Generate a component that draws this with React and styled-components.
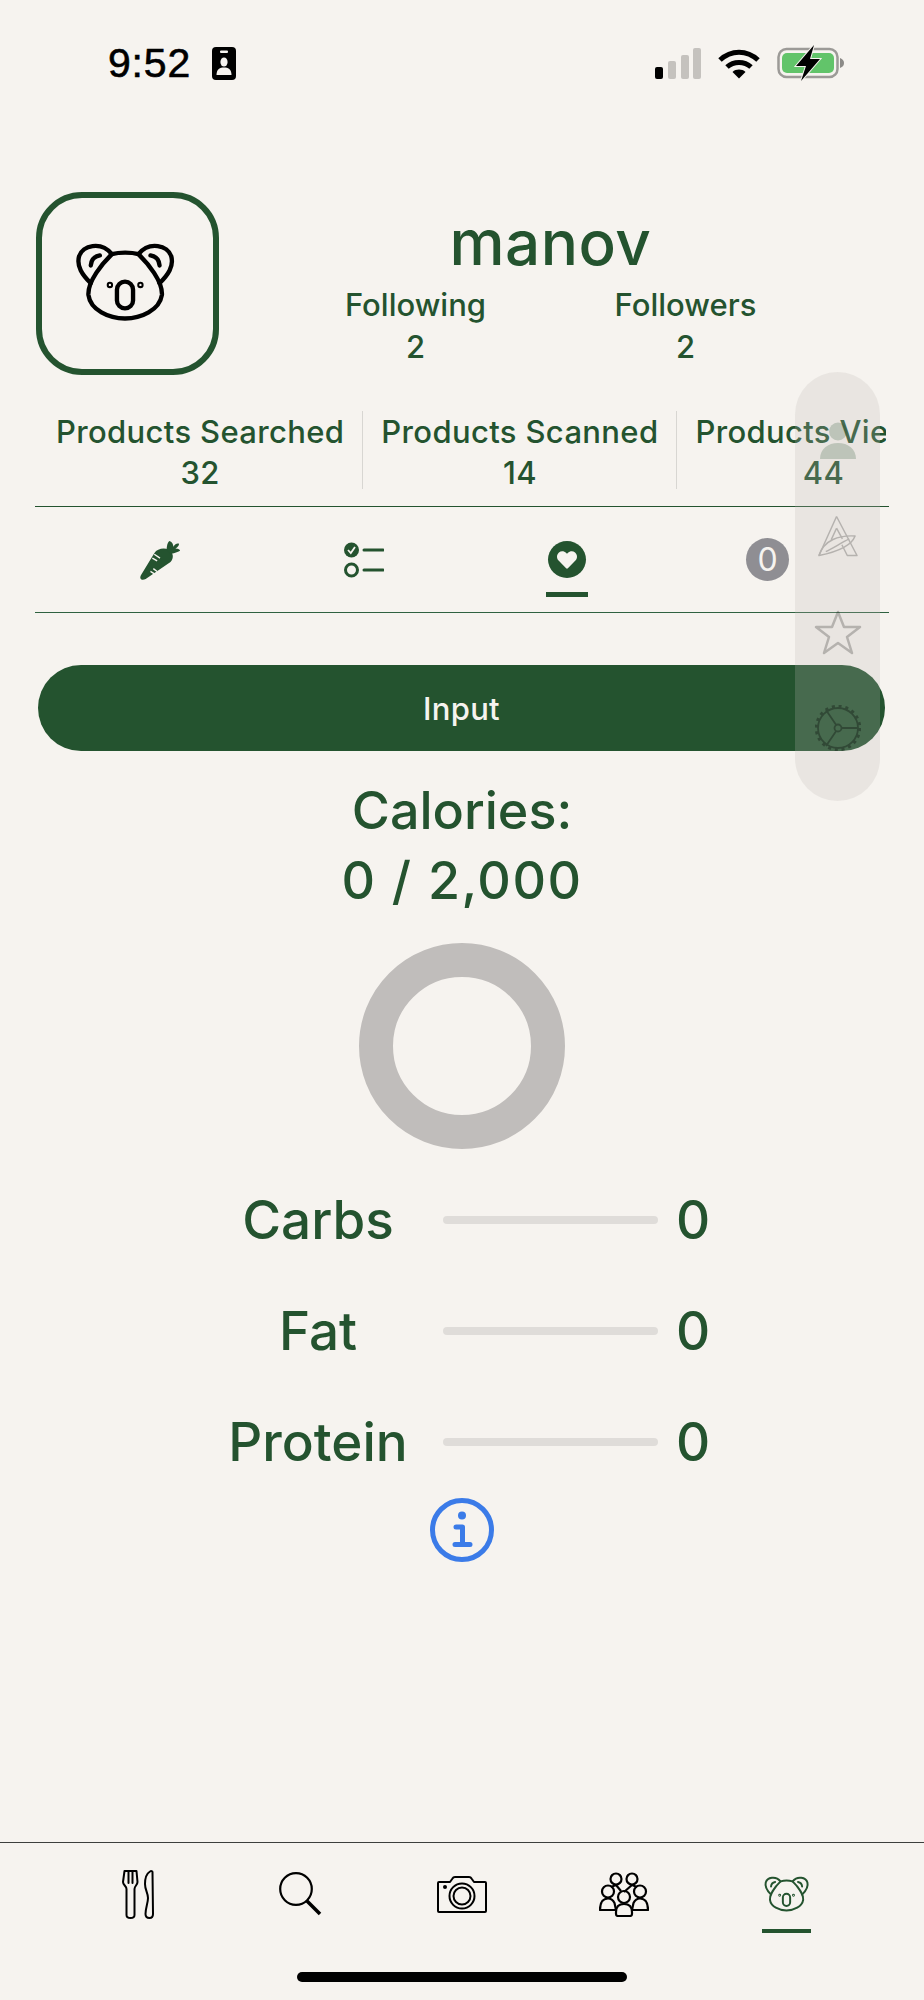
import React from "react";
import styled, { createGlobalStyle } from "styled-components";
import { FaHeart } from "react-icons/fa";

const GREEN = "#24532f";

const Global = createGlobalStyle`
  html, body { margin: 0; padding: 0; background: #f6f3ef; }
  * { box-sizing: border-box; }
`;

const Page = styled.div`
  position: relative;
  width: 924px;
  height: 2000px;
  overflow: hidden;
  background: #f6f3ef;
  color: ${GREEN};
  font-family: Inter, "Liberation Sans", sans-serif;
  display: flex;
  flex-direction: column;
`;

const StatusBar = styled.div`
  height: 126px;
  padding: 0 79px 0 108px;
  display: flex;
  align-items: center;
  justify-content: space-between;
  color: #000;
`;
const StatusGroup = styled.div`
  display: flex;
  align-items: center;
  gap: ${(p) => p.$gap}px;
`;
const Clock = styled.span`
  font-family: "Liberation Sans", sans-serif;
  font-size: 41px;
  letter-spacing: 0.8px;
  font-weight: 400;
  -webkit-text-stroke: 0.6px #000;
  line-height: 1;
`;

const Main = styled.main`
  flex: 1;
  padding: 66px 35px 0 35px;
  display: flex;
  flex-direction: column;
  min-height: 0;
`;

const Profile = styled.section`
  display: flex;
  align-items: flex-start;
`;
const Avatar = styled.div`
  width: 183px;
  height: 183px;
  flex: none;
  margin-left: 1px;
  border: 6px solid ${GREEN};
  border-radius: 46px;
  display: flex;
  align-items: center;
  justify-content: center;
  svg { margin-top: -3px; margin-left: -5px; }
`;
const ProfileInfo = styled.div`
  flex: 1;
  display: flex;
  flex-direction: column;
  align-items: center;
  padding-top: 13px;
  padding-right: 7px;
`;
const Username = styled.h1`
  margin: 0;
  font-size: 62px;
  line-height: 76px;
  font-weight: 500;
  letter-spacing: 0.5px;
`;
const FollowRow = styled.div`
  display: flex;
  margin-top: 3px;
`;
const Follow = styled.div`
  width: 270px;
  text-align: center;
  font-size: 31px;
  line-height: 42px;
  font-weight: 500;
  letter-spacing: 0;
`;

const Stats = styled.section`
  display: flex;
  margin: 36px 0 0 0;
  width: 851px;
  padding-left: 21px;
  overflow: hidden;
  white-space: nowrap;
  height: 95px;
  padding-bottom: 17px;
  flex: none;
`;
const Stat = styled.div`
  flex: none;
  padding: 0 18px;
  text-align: center;
  font-size: 31px;
  line-height: 41px;
  font-weight: 500;
  letter-spacing: 0.35px;
  border-left: 1px solid #d8d6d2;
  &:first-child { border-left: 0; padding-left: 0; }
`;

const Tabs = styled.nav`
  height: 107px;
  flex: none;
  border-top: 1.5px solid ${GREEN};
  border-bottom: 1.5px solid #2f6140;
  width: 854px;
  padding-left: 23px;
  display: grid;
  grid-template-columns: 204px 204px 201px 201px;
`;
const Tab = styled.div`
  position: relative;
  display: flex;
  align-items: center;
  justify-content: center;
  &::after {
    content: "";
    display: ${(p) => (p.$active ? "block" : "none")};
    position: absolute;
    left: 50%;
    bottom: 15px;
    width: 42px;
    height: 5px;
    margin-left: -21px;
    background: ${GREEN};
  }
`;
const HeartDisc = styled.div`
  width: 38px;
  height: 37px;
  border-radius: 50%;
  background: ${GREEN};
  color: #f6f3ef;
  display: flex;
  align-items: center;
  justify-content: center;
`;
const CountBadge = styled.div`
  width: 43px;
  height: 43px;
  border-radius: 50%;
  background: #8f8e93;
  color: #f6f3ef;
  font-size: 32px;
  display: flex;
  align-items: center;
  justify-content: center;
`;

const InputButton = styled.button`
  display: block;
  flex: none;
  width: 847px;
  height: 86px;
  margin: 52px 0 0 3px;
  border: 0;
  border-radius: 43px;
  background: ${GREEN};
  color: #f6f3ef;
  font: 500 31px Inter, sans-serif;
  letter-spacing: 0.3px;
`;

const Summary = styled.section`
  display: flex;
  flex-direction: column;
  align-items: center;
`;
const CaloriesLine = styled.div`
  font-size: 52px;
  line-height: 70px;
  font-weight: 500;
  letter-spacing: ${(p) => p.$spacing || 0}px;
  &:first-child { margin-top: 25px; }
`;
const Donut = styled.div`
  width: 206px;
  height: 206px;
  margin-top: 27px;
  border-radius: 50%;
  border: 34px solid #c0bdbb;
`;
const Macros = styled.div`
  margin-top: 15px;
  width: 100%;
  display: flex;
  flex-direction: column;
`;
const MacroRow = styled.div`
  display: grid;
  grid-template-columns: 390px 215px auto;
  column-gap: 18px;
  align-items: center;
  height: 111px;
`;
const MacroLabel = styled.div`
  justify-self: end;
  width: 214px;
  text-align: center;
  font-size: 53px;
  font-weight: 500;
`;
const MacroBar = styled.div`
  height: 8px;
  border-radius: 4px;
  background: #dfdcd9;
`;
const MacroValue = styled.div`
  font-size: 53px;
  font-weight: 500;
`;
const InfoButton = styled.div`
  margin-top: 1px;
  display: flex;
  justify-content: center;
`;

const BottomNav = styled.nav`
  flex: none;
  height: 158px;
  border-top: 1px solid #3d3f3d;
  padding: 0 57px;
  display: grid;
  grid-template-columns: repeat(5, 162px);
  align-items: start;
`;
const NavItem = styled.div`
  position: relative;
  height: 102px;
  display: flex;
  align-items: center;
  justify-content: center;
  &::after {
    content: "";
    display: ${(p) => (p.$active ? "block" : "none")};
    position: absolute;
    left: 50%;
    top: 86px;
    width: 49px;
    height: 4px;
    margin-left: -24px;
    background: ${GREEN};
  }
`;
const HomeIndicator = styled.div`
  position: absolute;
  left: 297px;
  bottom: 18px;
  width: 330px;
  height: 10px;
  border-radius: 5px;
  background: #000;
`;

const FloatingDock = styled.aside`
  position: absolute;
  left: 795px;
  top: 372px;
  width: 85px;
  height: 429px;
  border-radius: 43px;
  padding-top: 20px;
  background: rgba(190, 187, 180, 0.23);
  display: flex;
  flex-direction: column;
  align-items: center;
`;
const DockSlot = styled.div`
  height: 96px;
  display: flex;
  align-items: center;
  justify-content: center;
`;

const Koala = ({ size, color = "#000", w = 14 }) => (
  <svg width={size} height={size * 0.8} viewBox="222 216 310 248" fill="none" stroke={color} strokeWidth={w} strokeLinecap="round" strokeLinejoin="round">
    <path d="M275 345C250 320 232 295 240 265C250 232 305 218 338 258" />
    <path d="M480 345C505 320 523 295 515 265C505 232 450 218 417 258" />
    <path d="M338 258C360 252 395 252 417 258C445 285 490 340 487 380C480 425 425 450 377 450C329 450 274 425 268 380C265 340 310 285 338 258Z" />
    <rect x="353" y="340" width="48" height="80" rx="24" />
    <path d="M275 292C276 275 285 265 302 262" />
    <path d="M480 292C479 275 470 265 453 262" />
    <circle cx="332" cy="350" r="3" />
    <circle cx="423" cy="350" r="3" />
  </svg>
);

const IdBadge = () => (
  <svg width="24" height="33" viewBox="0 0 24 33">
    <rect width="24" height="33" rx="4" fill="#000" />
    <rect x="8" y="3.5" width="8" height="2.5" rx="1" fill="#f6f3ef" />
    <ellipse cx="12" cy="15" rx="3.6" ry="4.6" fill="#f6f3ef" />
    <path d="M4.5 28C4.5 22 8 20.5 12 20.5S19.5 22 19.5 28Z" fill="#f6f3ef" />
  </svg>
);

const Signal = () => (
  <svg width="46" height="31" viewBox="0 0 46 31">
    <rect x="0" y="19" width="8" height="12" rx="2" fill="#000" />
    <rect x="13" y="13" width="8" height="18" rx="2" fill="#c5c2be" />
    <rect x="26" y="7" width="8" height="24" rx="2" fill="#c5c2be" />
    <rect x="38" y="0" width="8" height="31" rx="2" fill="#c5c2be" />
  </svg>
);

const Wifi = () => (
  <svg width="42" height="31" viewBox="0 0 42 31" fill="none" stroke="#000" strokeWidth="5">
    <path d="M2 12C13 1.5 29 1.5 40 12" />
    <path d="M9 19C15.500 13 26.500 13 33 19" />
    <path d="M21 30.500L14.500 24C18 20.800 24 20.800 27.500 24Z" fill="#000" stroke="none" />
  </svg>
);

const Battery = () => (
  <svg width="68" height="36" viewBox="0 0 68 36">
    <rect x="1.500" y="4" width="59" height="28" rx="8" fill="none" stroke="#9c9a97" strokeWidth="2.500" />
    <rect x="5" y="8" width="52" height="20" rx="5" fill="#62c46a" />
    <path d="M63 13C66 14 67 16 67 18S66 22 63 23Z" fill="#8c8a87" />
    <path d="M37 0L19 21H29L24 36L43 14H33Z" fill="#000" stroke="#f6f3ef" strokeWidth="2" />
    <path d="M37 0L19 21H29L24 36L43 14H33Z" fill="#000" />
  </svg>
);

const CarrotIcon = () => (
  <svg width="46" height="42" viewBox="17 13 46 44" fill={GREEN}>
    <path d="M20 51L34 28C37 23 44 22 49 24C54 27 55 33 51 37L25 55C21 57 18 55 20 51Z" />
    <path d="M47 25C47 20 48 16 50 15C53 16 54 19 54 21C56 18 58 17 60 18C60 20 58 22 56 23C58 23 61 24 61 25C59 27 53 28 51 29Z" />
    <path d="M34 29L40 33M32 33L37 36M30 47L35 50M33 44L37 47" stroke="#f6f3ef" strokeWidth="1.500" fill="none" />
  </svg>
);

const ChecklistIcon = () => (
  <svg width="40" height="36" viewBox="0 0 40 36" fill="none">
    <circle cx="7.500" cy="8" r="7.500" fill={GREEN} />
    <path d="M4 8L6.800 11L11 5" stroke="#f6f3ef" strokeWidth="1.800" />
    <circle cx="7.500" cy="28" r="6" stroke={GREEN} strokeWidth="3" />
    <path d="M20 8H39M20 28H39" stroke={GREEN} strokeWidth="3" strokeLinecap="round" />
  </svg>
);

const InfoIcon = () => (
  <svg width="64" height="64" viewBox="0 0 64 64" fill="none" stroke="#3b7be8">
    <circle cx="32" cy="32" r="29.500" strokeWidth="5" />
    <circle cx="32" cy="17.500" r="4" fill="#3b7be8" stroke="none" />
    <path d="M26 29H32.500V46M25 46.500H40" strokeWidth="5" strokeLinecap="round" strokeLinejoin="round" />
  </svg>
);

const ForkKnife = () => (
  <svg width="32" height="49" viewBox="0 0 32 49" fill="none" stroke="#000" strokeWidth="2" strokeLinejoin="round" strokeLinecap="round">
    <path d="M2.500 1H14.500L15.500 12C15.500 15 12.500 16 12.500 19V45C12.500 47 10.500 48 8.500 48S4.500 47 4.500 45V19C4.500 16 1 15 1 12Z" />
    <path d="M6.500 1V13M10.500 1V13" />
    <path d="M30.500 2C30.500 1 29 .8 28 1.500C24 4 23 9 23 14C23 20 26 23 26 28C26 33 23.500 38 23.500 44C23.500 47 25.500 48 27.500 48S31 47 31 44Z" />
  </svg>
);

const SearchIcon = () => (
  <svg width="43" height="44" viewBox="0 0 43 44" fill="none" stroke="#000">
    <circle cx="17" cy="17" r="15.800" strokeWidth="2.200" />
    <path d="M28 29L41 42" strokeWidth="3.500" />
  </svg>
);

const CameraIcon = () => (
  <svg width="50" height="37" viewBox="0 0 50 37" fill="none" stroke="#000" strokeWidth="2" strokeLinejoin="round">
    <path d="M2 6H13L15.500 2.500C16 1.500 17 1 18 1H32C33 1 34 1.500 34.500 2.500L37 6H48C48.600 6 49 6.400 49 7V35C49 35.600 48.600 36 48 36H2C1.400 36 1 35.600 1 35V7C1 6.400 1.400 6 2 6Z" />
    <circle cx="25" cy="20" r="12.500" />
    <circle cx="25" cy="20" r="8.500" />
    <circle cx="8" cy="11" r="2" fill="#000" stroke="none" />
  </svg>
);

const PeopleIcon = () => (
  <svg width="50" height="45" viewBox="0 0 50 45" fill="none" stroke="#000" strokeWidth="2.200" strokeLinejoin="round">
    <circle cx="17" cy="7" r="5.500" />
    <circle cx="33" cy="7" r="5.500" />
    <path d="M12 15L17 13L22 19M38 15L33 13L25 20" />
    <circle cx="9" cy="19.500" r="6" />
    <circle cx="41" cy="19.500" r="6" />
    <path d="M1 38C1 30 4 26.500 9 26.500C12 26.500 14 28 15.500 31L17 38H2Z" />
    <path d="M49 38C49 30 46 26.500 41 26.500C38 26.500 36 28 34.500 31L33 38H48Z" />
    <circle cx="25" cy="25" r="6" />
    <path d="M17 40C17 36 19 32 25 32S33 36 33 40V42C33 43 32 44 31 44H19C18 44 17 43 17 42Z" fill="#f6f3ef" />
  </svg>
);

const PersonGlyph = () => (
  <svg width="36" height="37" viewBox="0 0 36 37" fill="#24532f" opacity="0.22">
    <circle cx="18" cy="9.500" r="9" />
    <path d="M0 37C0 27 8 21 18 21S36 27 36 37Z" />
  </svg>
);

const LeafLogo = () => (
  <svg width="40" height="42" viewBox="0 0 41 42" fill="none" stroke="#000" strokeWidth="1.500" opacity="0.22" strokeLinejoin="round">
    <path d="M19 1L1 41M19 1L40 41H30L24.500 30" />
    <path d="M19 13L13.500 25M19 13L25 24" />
    <path d="M1 41C6 25 22 20 38 21C34 32 16 38 1 41Z" />
    <path d="M8 37C16 33 24 28 32 24" />
  </svg>
);

const StarGlyph = () => (
  <svg width="48" height="45" viewBox="0 0 48 45" fill="none" stroke="#000" strokeWidth="2.500" opacity="0.22" strokeLinejoin="round">
    <path d="M24 2L30 17H46L33 27L38 43L24 33L10 43L15 27L2 17H18Z" />
  </svg>
);

const GearGlyph = () => (
  <svg width="46" height="46" viewBox="0 0 46 46" fill="none" stroke="#000" opacity="0.3">
    <circle cx="23" cy="23" r="20" strokeWidth="1.800" />
    <circle cx="23" cy="23" r="21.500" strokeWidth="3.500" strokeDasharray="3 3.750" />
    <circle cx="23" cy="23" r="3.500" strokeWidth="1.800" />
    <path d="M26.500 23H43M21.200 20L11 5M21.200 26L11 41" strokeWidth="1.800" />
  </svg>
);

export default function App() {
  return (
    <Page>
      <Global />
      <StatusBar>
        <StatusGroup $gap={21}>
          <Clock>9:52</Clock>
          <IdBadge />
        </StatusGroup>
        <StatusGroup $gap={17}>
          <Signal />
          <Wifi />
          <Battery />
        </StatusGroup>
      </StatusBar>

      <Main>
        <Profile>
          <Avatar><Koala size={104} w={13} /></Avatar>
          <ProfileInfo>
            <Username>manov</Username>
            <FollowRow>
              <Follow>Following<br />2</Follow>
              <Follow>Followers<br />2</Follow>
            </FollowRow>
          </ProfileInfo>
        </Profile>

        <Stats>
          <Stat>Products Searched<br />32</Stat>
          <Stat>Products Scanned<br />14</Stat>
          <Stat>Products Viewed<br />44</Stat>
        </Stats>

        <Tabs>
          <Tab><CarrotIcon /></Tab>
          <Tab><ChecklistIcon /></Tab>
          <Tab $active><HeartDisc><FaHeart size={20} /></HeartDisc></Tab>
          <Tab><CountBadge>0</CountBadge></Tab>
        </Tabs>

        <InputButton>Input</InputButton>

        <Summary>
          <CaloriesLine>Calories:</CaloriesLine>
          <CaloriesLine $spacing={1.5}>0 / 2,000</CaloriesLine>
          <Donut />
          <Macros>
            {["Carbs", "Fat", "Protein"].map((m) => (
              <MacroRow key={m}>
                <MacroLabel>{m}</MacroLabel>
                <MacroBar />
                <MacroValue>0</MacroValue>
              </MacroRow>
            ))}
          </Macros>
          <InfoButton><InfoIcon /></InfoButton>
        </Summary>
      </Main>

      <BottomNav>
        <NavItem><ForkKnife /></NavItem>
        <NavItem><SearchIcon /></NavItem>
        <NavItem><CameraIcon /></NavItem>
        <NavItem><PeopleIcon /></NavItem>
        <NavItem $active><Koala size={47} color={GREEN} w={13} /></NavItem>
      </BottomNav>
      <HomeIndicator />

      <FloatingDock>
        <DockSlot><PersonGlyph /></DockSlot>
        <DockSlot><LeafLogo /></DockSlot>
        <DockSlot><StarGlyph /></DockSlot>
        <DockSlot><GearGlyph /></DockSlot>
      </FloatingDock>
    </Page>
  );
}
